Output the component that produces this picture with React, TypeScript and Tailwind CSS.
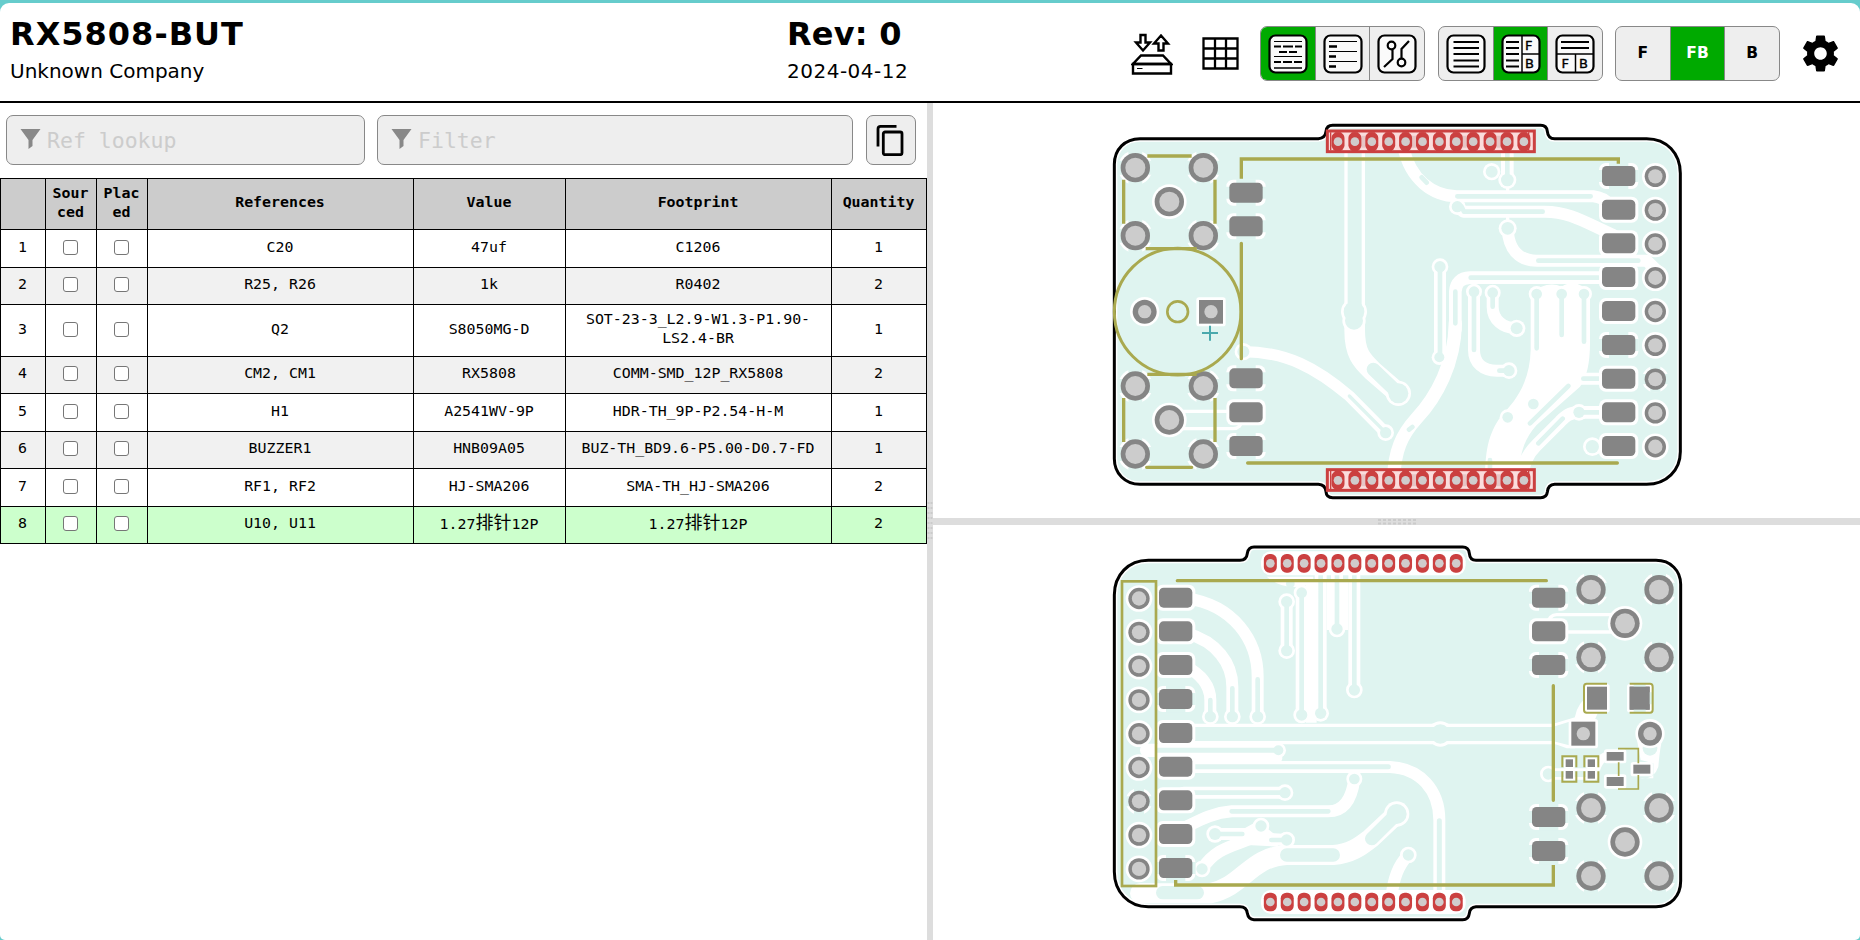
import React from "react";

const TEAL = "#dff4f0";
const PAD = "#858585";
const HOLE = "#cccccc";
const SILK = "#a9a94f";
const RED = "#cb4040";

type Pt = [number, number];
type RectPad = { x: number; y: number; thermal?: boolean };

function Trace({ d, w = 36 }: { d: string; w?: number }) {
  return <path d={d} stroke="#fff" strokeWidth={w} fill="none" strokeLinecap="round" strokeLinejoin="round" />;
}
function Slot({ d, w = 14 }: { d: string; w?: number }) {
  return <path d={d} stroke={TEAL} strokeWidth={w} fill="none" strokeLinecap="round" strokeLinejoin="round" />;
}
function Rings({ vias }: { vias: number[][] }) {
  return <>{vias.map(([x, y, r], i) => <circle key={i} cx={x} cy={y} r={r + 8} fill="#fff" />)}</>;
}
function Cores({ vias }: { vias: number[][] }) {
  return <>{vias.map(([x, y, r], i) => <circle key={i} cx={x} cy={y} r={r} fill={TEAL} />)}</>;
}
function Hole({ c, r, inner, thermal }: { c: Pt; r: number; inner: number; thermal?: boolean }) {
  const [x, y] = c;
  return (
    <g>
      <circle cx={x} cy={y} r={r + 8} fill="#fff" />
      {thermal && <path d={`M${x - r - 9} ${y}H${x + r + 9}M${x} ${y - r - 9}V${y + r + 9}`} stroke={TEAL} strokeWidth={r * 0.95} />}
      <circle cx={x} cy={y} r={r} fill={PAD} />
      <circle cx={x} cy={y} r={inner} fill={HOLE} />
    </g>
  );
}
function Smd({ x, y, thermal }: RectPad) {
  return (
    <g>
      <rect x={x - 9} y={y - 9} width={118} height={78} rx={20} fill="#fff" />
      {thermal && <path d={`M${x - 10} ${y + 30}H${x + 110}`} stroke={TEAL} strokeWidth={36} />}
      {thermal && <path d={`M${x + 50} ${y - 10}V${y + 70}`} stroke={TEAL} strokeWidth={58} />}
      <rect x={x} y={y} width={100} height={60} rx={14} fill={PAD} />
    </g>
  );
}
function Box({ x, y, w, h, halo = 8 }: { x: number; y: number; w: number; h: number; halo?: number }) {
  return (
    <g>
      <rect x={x - halo} y={y - halo} width={w + halo * 2} height={h + halo * 2} rx={halo} fill="#fff" />
      <rect x={x} y={y} width={w} height={h} fill={PAD} />
    </g>
  );
}
const PINS = Array.from({ length: 12 }, (_, i) => i);
function Pins({ x, y, boxed }: { x: number; y: number; boxed?: boolean }) {
  return (
    <g>
      {boxed ? (
        <>
          <rect x={x - 32} y={y - 32} width={621} height={62} fill="#fbdcdc" stroke={RED} strokeWidth={9} />
          <path d={`M${x - 22} ${y - 28}V${y + 26}M${x + 572} ${y - 28}V${y + 26}`} stroke={RED} strokeWidth={4} />
          <path d={`M${x + 76} ${y - 18}v36M${x + 228} ${y - 18}v36M${x + 380} ${y - 18}v36M${x + 482} ${y - 18}v36`} stroke="#e6c6c6" strokeWidth={12} />
          <path d={`M${x - 10} ${y - 25}H${x + 567}M${x - 10} ${y + 25}H${x + 567}`} stroke={RED} strokeWidth={6} strokeDasharray="20 30.7" />
        </>
      ) : (
        <rect x={x - 28} y={y - 36} width={614} height={72} rx={30} fill="#fff" />
      )}
      {PINS.map((i) => (
        <g key={i}>
          <rect x={x + i * 50.7 - 19.5} y={y - 28} width={39} height={56} rx={17} fill={RED} />
          <circle cx={x + i * 50.7} cy={y} r={13} fill="#d0cccc" />
        </g>
      ))}
    </g>
  );
}

const FRONT = "M120 86H655Q676 84 678 64Q680 46 698 46H1322Q1340 46 1342 64Q1344 86 1364 86H1640C1700 86 1741 130 1741 190V1025C1741 1080 1700 1123 1640 1123H1364Q1344 1124 1342 1146Q1340 1163 1322 1163H698Q679 1163 678 1145Q676 1124 655 1123H120C75 1123 43 1090 43 1046V163C43 118 75 86 120 86Z";
const BACK = "M145 91H420Q440 90 442 70Q445 51 462 51H1088Q1106 51 1108 70Q1110 91 1128 91H1668C1712 91 1742 122 1742 163V1053C1742 1098 1712 1130 1668 1130H1128Q1110 1131 1108 1150Q1106 1169 1088 1169H462Q445 1168 442 1150Q440 1130 420 1130H145C85 1130 43 1085 43 1025V195C43 135 85 91 145 91Z";

const BIG_FRONT: [Pt, boolean][] = [
  [[106, 173], true], [[310, 173], true], [[208, 275], false], [[106, 377], true], [[310, 377], true],
  [[106, 828], true], [[310, 828], true], [[208, 930], false], [[106, 1032], true], [[310, 1032], true],
];
const BIG_BACK: [Pt, boolean][] = [
  [[1473, 179], true], [[1677, 179], true], [[1575, 280], false], [[1473, 382], true], [[1677, 382], true],
  [[1473, 834], true], [[1677, 834], true], [[1575, 936], false], [[1473, 1038], true], [[1677, 1038], true],
];
const FRONT_PADS: RectPad[] = [
  { x: 388, y: 218, thermal: true }, { x: 388, y: 319, thermal: true }, { x: 388, y: 775, thermal: true },
  { x: 388, y: 877 }, { x: 388, y: 978, thermal: true },
  { x: 1506, y: 168, thermal: true }, { x: 1506, y: 269 }, { x: 1506, y: 370 }, { x: 1506, y: 471 }, { x: 1506, y: 573 },
  { x: 1506, y: 675, thermal: true }, { x: 1506, y: 776 }, { x: 1506, y: 877 }, { x: 1506, y: 978 },
];
const BACK_PADS: RectPad[] = [
  { x: 177, y: 173 }, { x: 177, y: 274 }, { x: 177, y: 375 }, { x: 177, y: 477, thermal: true }, { x: 177, y: 579 },
  { x: 177, y: 680 }, { x: 177, y: 781 }, { x: 177, y: 882 }, { x: 177, y: 984, thermal: true },
  { x: 1296, y: 173, thermal: true }, { x: 1296, y: 274 }, { x: 1296, y: 375, thermal: true },
  { x: 1296, y: 831, thermal: true }, { x: 1296, y: 933, thermal: true },
];
const FRONT_VIAS = [
  [762, 605, 31], [762, 632, 27], [895, 850, 30], [430, 725, 18], [857, 968, 17], [1020, 470, 17], [1018, 742, 15], [1122, 545, 16], [1227, 782, 17],
  [1178, 548, 16], [1250, 655, 18], [1310, 552, 16], [1385, 552, 16], [1452, 552, 16], [1437, 907, 17], [1477, 1010, 20],
  [1072, 290, 17], [1175, 185, 18], [1222, 210, 19], [1223, 355, 19], [1300, 882, 16], [1223, 922, 16],
];
const BACK_VIAS = [
  [473, 560, 17], [397, 560, 17], [331, 560, 17], [535, 661, 15], [763, 747, 16], [555, 788, 17], [345, 912, 18], [483, 888, 17],
  [560, 930, 17], [306, 1017, 17], [890, 852, 30], [925, 975, 17], [560, 215, 17], [560, 362, 17], [605, 188, 16], [605, 555, 17],
  [662, 550, 17], [711, 297, 17], [763, 480, 17], [1345, 732, 17],
];
const ROWS9 = [0, 1, 2, 3, 4, 5, 6, 7, 8];

function FrontBoard() {
  return (
    <svg className="block h-full w-full" viewBox="-501 -21 2781 1245">
      <clipPath id="front"><path d={FRONT} /></clipPath>
      <g clipPath="url(#front)">
        <path d={FRONT} fill={TEAL} />
        <Trace w={62} d="M764 110V660C764 730 785 752 817 782L895 850" />
        <Trace d="M430 725C560 725 650 775 748 858L857 968" w={34} />
        <Trace d="M1066 640C1064 760 1010 860 950 925C905 975 884 1020 880 1110" w={40} />
        <Trace d="M1020 470V742" />
        <Trace d="M1066 660V545Q1068 505 1110 503H1510" w={38} />
        <Trace d="M1122 545V720C1122 760 1150 782 1190 782H1227" />
        <Trace d="M1178 548V590C1178 630 1210 655 1250 655" />
        <path fill="#fff" d="M1292 552V720C1290 800 1260 860 1210 910C1170 960 1155 1010 1155 1110H1255C1260 1020 1275 985 1310 945L1440 830Q1470 790 1470 700V552Q1430 500 1385 530Q1340 510 1292 552Z" />
        <Trace d="M1430 806H1510" />
        <Trace d="M1510 907H1437C1405 908 1395 920 1380 935L1310 1005Q1268 1045 1265 1110" w={38} />
        <Trace d="M910 110C930 210 1000 258 1070 259H1480Q1510 262 1530 285" />
        <Trace d="M1072 290L1090 305H1335C1410 305 1460 340 1540 375" />
        <Trace d="M1222 210V110" w={38} />
        <Trace d="M1223 220V240M1223 320V355" w={10} />
        <Trace d="M1223 355C1225 420 1260 452 1310 452H1640L1680 490" />
        <Trace d="M208 930H400" w={62} />
        <Rings vias={FRONT_VIAS} />
        <Slot w={42} d="M764 110V590" />
        <Slot w={40} d="M820 778L895 850" />
        <Slot w={10} d="M748 858L857 968" />
        <Slot w={14} d="M927 959L937 951M965 202L980 218M1020 470V742M1066 545V640" />
        <Slot d="M1112 503H1495M1122 545V720M1198 782H1227M1178 548V590" />
        <Slot d="M1310 552V715M1385 552V675M1452 552V695M1405 828L1290 940M1388 926L1315 1000M1170 1050V1100" />
        <Slot d="M1450 806H1510M1437 907H1510M1072 259H1472M1085 290L1092 305H1328M1222 210V110M1315 452H1615" />
        <Slot w={42} d="M208 930H400" />
        <Cores vias={FRONT_VIAS} />
      </g>
      <path d={FRONT} fill="none" stroke="#fff" strokeWidth={18} />
      <path d={FRONT} fill="none" stroke="#000" strokeWidth={9} />
      {BIG_FRONT.map(([c, t], i) => <Hole key={i} c={c} r={44} inner={30} thermal={t} />)}
      {FRONT_PADS.map((p, i) => <Smd key={i} {...p} />)}
      {ROWS9.map((i) => <Hole key={i} c={[1666, 199 + i * 101.4]} r={32} inner={21.5} thermal={i === 6} />)}
      <Hole c={[134, 605]} r={36} inner={20} />
      <Box x={297} y={570} w={72} h={71} />
      <circle cx={333} cy={605} r={20} fill={HOLE} />
      <path d="M330 647V692M306 669H354" stroke="#4aa9ad" strokeWidth={6} />
      <g fill="none" stroke={SILK} strokeWidth={9} strokeLinecap="round">
        <circle cx={233} cy={605} r={190} />
        <circle cx={233} cy={605} r={31} strokeWidth={8} />
        <path strokeWidth={10} strokeLinecap="butt" d="M142 138H275M71 209V341M345 209V341M137 416H290M142 793H290M71 864V996M345 864V996" />
        <path strokeWidth={10} d="M140 1072H275M424 400V746M443 1059H1552" />
        <path strokeWidth={10} strokeLinecap="butt" d="M424 206V147H1555V161" />
      </g>
      <Pins x={714} y={95} boxed />
      <Pins x={714} y={1111} boxed />
    </svg>
  );
}

function BackBoard() {
  return (
    <svg className="block h-full w-full" viewBox="-501 -18 2781 1248">
      <clipPath id="back"><path d={BACK} /></clipPath>
      <g clipPath="url(#back)">
        <path d={BACK} fill={TEAL} />
        <Trace d="M260 205C400 225 473 330 473 440V560" />
        <Trace d="M260 310C350 335 397 400 397 470V560" />
        <Trace d="M250 405C310 435 331 470 331 510V560" />
        <Trace w={62} d="M240 612H1410" />
        <Trace w={40} d="M140 661H535" />
        <Trace w={24} d="M270 684H535" />
        <Trace d="M250 711H870C960 715 1018 780 1018 870V1110" />
        <Trace d="M763 747C755 810 730 844 685 844H395C340 848 300 870 260 890" />
        <Trace d="M250 788H555" />
        <Trace d="M345 912H440L483 888M480 925L560 930M306 1017C350 950 400 950 480 915" />
        <path fill="#fff" d="M430 900L483 880L520 910L535 950L440 945Z" />
        <Trace w={60} d="M120 1090H330C430 1070 450 980 560 975H700C750 972 780 950 812 925L890 852" />
        <Trace d="M925 975C900 1000 880 1040 875 1100" />
        <Trace d="M560 215V362M605 188V555M662 110V550M711 110V297M763 110V480" />
        <path fill="#fff" d="M618 150H650V578H618ZM680 150H700V300H680ZM725 150H745V300H725ZM500 140H640V160Q560 190 500 140Z" />
        <circle cx={571} cy={161} r={13} fill={TEAL} />
        <circle cx={1021} cy={612} r={38} fill="#fff" />
        <Trace w={62} d="M1370 280H1575" />
        <path fill="#fff" d="M1455 505Q1420 540 1425 580H1480L1495 545H1465Z" />
        <path fill="#fff" d="M1365 580L1425 562V655H1400L1365 642Z" />
        <Trace d="M1345 732H1480" w={34} />
        <path fill="#fff" d="M1480 712Q1490 665 1530 662V690Q1510 690 1500 722H1480Z" />
        <path fill="#fff" d="M1610 625L1622 690L1660 700V745H1620V745Q1662 750 1675 710Q1680 650 1688 625Z" />
        <Rings vias={BACK_VIAS} />
        <Slot d="M473 448V560M397 475V560M331 510V560" />
        <Slot w={42} d="M240 612H1410" />
        <circle cx={1021} cy={612} r={29} fill={TEAL} />
        <path fill={TEAL} d="M1355 592L1425 570V650L1355 632Z" />
        <Slot w={15} d="M172 661H535M280 710H865M1018 872V1110" />
        <Slot d="M395 844H685M250 788H555M345 912H427M514 930H560" />
        <Slot w={40} d="M560 975H700M815 926L890 852M188 1088H292" />
        <Slot d="M560 215V362M605 188V555M662 110V550M711 110V297M763 110V480" />
        <Slot w={42} d="M1370 280H1575" />
        <Slot w={18} d="M1345 732H1480" />
        <circle cx={1650} cy={655} r={22} fill={TEAL} />
        <Cores vias={BACK_VIAS} />
      </g>
      <path d={BACK} fill="none" stroke="#fff" strokeWidth={18} />
      <path d={BACK} fill="none" stroke="#000" strokeWidth={9} />
      {BIG_BACK.map(([c, t], i) => <Hole key={i} c={c} r={44} inner={30} thermal={t} />)}
      {BACK_PADS.map((p, i) => <Smd key={i} {...p} />)}
      {ROWS9.map((i) => <Hole key={i} c={[117, 205.5 + i * 101.4]} r={32} inner={21.5} thermal={i === 6} />)}
      <Box x={1461} y={470} w={60} h={69} />
      <Box x={1589} y={470} w={60} h={69} />
      <path d="M1619 455V475M1619 535V555M1645 505H1660" stroke={TEAL} strokeWidth={36} />
      <rect x={1589} y={470} width={60} height={69} fill={PAD} />
      <Box x={1414} y={575} w={72} h={72} />
      <circle cx={1450} cy={611} r={20} fill={HOLE} />
      <Hole c={[1650, 611]} r={36} inner={20} />
      <Box x={1520} y={666} w={51} h={26} />
      <Box x={1520} y={741} w={51} h={27} />
      <Box x={1600} y={704} w={51} h={27} />
      {[1397, 1463].map((x) => (
        <g key={x}>
          <Box x={x} y={688} w={22} h={23} halo={5} />
          <Box x={x} y={723} w={22} h={23} halo={5} />
        </g>
      ))}
      <g fill="none" stroke={SILK} strokeWidth={6}>
        <rect x={66} y={154} width={102} height={914} strokeWidth={8} />
        <path strokeWidth={10} strokeLinecap="round" d="M232 152H1339M1360 467V811" />
        <path strokeWidth={10} d="M227 1050V1065H1360V1005" />
        <path d="M1521 461H1460Q1452 461 1452 470V539Q1452 548 1460 548H1521M1589 461H1650Q1658 461 1658 470V539Q1658 548 1650 548H1589" />
        <path d="M1387 712V679H1429V712M1387 724V755H1429V724M1453 712V679H1495V712M1453 724V755H1495V724" />
        <path d="M1554 656H1615V700M1615 735V777H1554M1556 697V738" strokeWidth={5} />
      </g>
      <Pins x={511} y={100} />
      <Pins x={511} y={1116} />
    </svg>
  );
}

function Frame({ children }: { children: React.ReactNode }) {
  return (
    <svg className="h-10 w-10" viewBox="0 0 40 40" fill="none" stroke="#000">
      <rect x="1.5" y="1.5" width="37" height="37" rx="6" fill="#fafafa" strokeWidth="2.2" />
      {children}
    </svg>
  );
}
const label = "font-['DejaVu_Sans'] text-[13px] font-normal";
const ICONS = {
  full: <Frame><path strokeWidth="1" d="M6 7.5H34M6 22.5H34" /><path strokeWidth="1.4" d="M6 34H34" /><path strokeWidth="2.2" d="M6 12.5h7m2 0h10m2 0h7M11 18h8m2 0h8M6 28h7m2 0h9m2 0h8" /></Frame>,
  tail: <Frame><path strokeWidth="1.2" d="M6 7.5H34M6 17.5H34M6 27.5H34" /><path strokeWidth="2.4" d="M6 12.5h8M6 22.5h7M6 32.5h7" /></Frame>,
  nets: <Frame><g strokeWidth="2.2"><circle cx="14.5" cy="11.5" r="3.8" /><circle cx="24.5" cy="28.5" r="3.8" /><path d="M15.5 15.5V25L7 33M24.5 24.5V15L32 7" /></g></Frame>,
  bom: <Frame><path strokeWidth="1.8" d="M7.5 8H33M7.5 14H33M7.5 20H33M7.5 26.5H33M7.5 32.5H33" /></Frame>,
  lr: <Frame><path strokeWidth="1.8" d="M5 8h13M5 14h13M5 20h13M5 26.5h13M5 32.5h13" /><path strokeWidth="1.5" d="M21 2V38M21 20H38" /><g fill="#000" stroke="#000" strokeWidth=".4"><text className={label} x="24" y="15.8">F</text><text className={label} x="24" y="33.8">B</text></g></Frame>,
  tb: <Frame><path strokeWidth="1.8" d="M6 8H34M6 14H34" /><path strokeWidth="1.5" d="M2 20H38M20.5 20V38" /><g fill="#000" stroke="#000" strokeWidth=".4"><text className={label} x="6.5" y="33.8">F</text><text className={label} x="24" y="33.8">B</text></g></Frame>,
};

function Group({ items, active }: { items: React.ReactNode[]; active: number }) {
  return (
    <div className="flex h-[55px] w-[165px] overflow-hidden rounded-[7px] border border-[#888] bg-[#eee] font-['DejaVu_Sans'] text-[15.5px] font-bold">
      {items.map((item, i) => (
        <button key={i} className={`flex flex-1 items-center justify-center ${i ? "border-l border-[#888]" : ""} ${i === active ? "bg-[#00aa00] text-white" : "text-black"}`}>
          {item}
        </button>
      ))}
    </div>
  );
}

function Filter({ text, className }: { text: string; className: string }) {
  return (
    <div className={`flex h-[50px] items-center rounded-[7px] border border-[#888] bg-[#eee] pl-[13px] ${className}`}>
      <svg className="mt-[-3px] h-5 w-[21px]" viewBox="0 0 21 20"><path d="M.5 0H20.5L12.5 11V17L8.5 20V11Z" fill="#888" /></svg>
      <span className="mt-[3px] ml-[6px] font-['DejaVu_Sans_Mono',monospace] text-[21.5px] text-[#ccc]">{text}</span>
    </div>
  );
}

const HEAD = ["", "Sour\nced", "Plac\ned", "References", "Value", "Footprint", "Quantity"];
const HEADER_PIN = <>1.27<span className="text-[18px] leading-none">排针</span>12P</>;
const ROWS: [string, React.ReactNode, React.ReactNode, string, string][] = [
  ["C20", "47uf", "C1206", "1", "h-[38px]"],
  ["R25, R26", "1k", "R0402", "2", "h-[37px]"],
  ["Q2", "S8050MG-D", "SOT-23-3_L2.9-W1.3-P1.90-\nLS2.4-BR", "1", "h-[52px]"],
  ["CM2, CM1", "RX5808", "COMM-SMD_12P_RX5808", "2", "h-[37px]"],
  ["H1", "A2541WV-9P", "HDR-TH_9P-P2.54-H-M", "1", "h-[38px]"],
  ["BUZZER1", "HNB09A05", "BUZ-TH_BD9.6-P5.00-D0.7-FD", "1", "h-[37px]"],
  ["RF1, RF2", "HJ-SMA206", "SMA-TH_HJ-SMA206", "2", "h-[38px]"],
  ["U10, U11", HEADER_PIN, HEADER_PIN, "2", "h-[37px]"],
];
const cell = "border-r border-b border-black pt-0 pr-px pb-[3px] pl-0 whitespace-pre";
const Check = () => <span className="mx-auto block h-[15px] w-[15px] rounded-[3px] border border-[#767676] bg-white" />;

function BomTable() {
  return (
    <table className="w-[927px] table-fixed border-separate border-spacing-0 border-t border-l border-black text-center font-['DejaVu_Sans_Mono','Noto_Sans_CJK_SC',monospace] text-[14.9px] leading-[19px] text-black">
      <colgroup>
        <col className="w-[45px]" /><col className="w-[51px]" /><col className="w-[51px]" /><col className="w-[266px]" />
        <col className="w-[152px]" /><col className="w-[266px]" /><col className="w-[95px]" />
      </colgroup>
      <thead>
        <tr className="h-[51px] bg-[#ccc]">
          {HEAD.map((h, i) => <th key={i} className={cell}>{h}</th>)}
        </tr>
      </thead>
      <tbody>
        {ROWS.map(([ref, value, footprint, qty, height], i) => (
          <tr key={i} className={`${height} ${i === 7 ? "bg-[#ccffcc]" : i % 2 ? "bg-[#f1f1f1]" : "bg-white"}`}>
            <td className={cell}>{i + 1}</td>
            <td className={cell}><Check /></td>
            <td className={cell}><Check /></td>
            <td className={cell}>{ref}</td>
            <td className={cell}>{value}</td>
            <td className={cell}>{footprint}</td>
            <td className={cell}>{qty}</td>
          </tr>
        ))}
      </tbody>
    </table>
  );
}

export default function App() {
  return (
    <div className="h-[940px] w-[1860px] overflow-hidden bg-[#66cccc] pt-[3px] font-['DejaVu_Sans',sans-serif] text-black">
      <div className="flex h-[937px] flex-col overflow-hidden rounded-t-[9px] rounded-b-[5px] bg-white">
        <header className="flex h-[100px] shrink-0 border-b-2 border-black">
          <div className="w-[787px] pl-[10px]">
            <h1 className="mt-[12px] text-[32px] leading-[38px] font-bold tracking-[1px]">RX5808-BUT</h1>
            <p className="mt-[6px] text-[20px] leading-[24px]">Unknown Company</p>
          </div>
          <div className="w-[343px]">
            <h1 className="mt-[12px] text-[32px] leading-[38px] font-bold tracking-[0.2px]">Rev: 0</h1>
            <p className="mt-[6px] text-[20px] leading-[24px] tracking-[0.5px]">2024-04-12</p>
          </div>
          <div className="flex h-[101px] items-center">
            <svg className="ml-[1px] h-[42px] w-[42px]" viewBox="0 0 42 42" fill="none" stroke="#000" strokeWidth="2.4">
              <path d="M9.5 2H14.500V9.500H19L12 17.500L5 9.500H9.500ZM27.500 17.500V10.500H23L30 2.500L37 10.500H32.500V17.500ZM10 22.500H32L40 31H2Z" />
              <path d="M2 31H40V40.500H2Z" />
              <path strokeWidth="1.2" d="M6 35.500H11.500" />
            </svg>
            <svg className="ml-[29px] h-[33px] w-[37px]" viewBox="0 0 37 33" fill="none" stroke="#000" strokeWidth="2.3">
              <path d="M1.500 1.500H35.500V31.500H1.500ZM13 1V32M24 1V32M1 11.500H36M1 21.500H36" />
            </svg>
            <div className="ml-[21px] flex items-center">
              <Group active={0} items={[ICONS.full, ICONS.tail, ICONS.nets]} />
              <div className="mr-3 ml-[13px]"><Group active={1} items={[ICONS.bom, ICONS.lr, ICONS.tb]} /></div>
              <Group active={1} items={["F", "FB", "B"]} />
            </div>
            <svg className="ml-[19px] h-[43px] w-[43px]" viewBox="0 0 24 24">
              <path d="M19.430 12.980c.04-.32.07-.64.07-.98s-.03-.66-.07-.98l2.110-1.650c.19-.15.24-.42.12-.64l-2-3.460c-.12-.22-.39-.3-.61-.22l-2.490 1c-.52-.4-1.080-.73-1.690-.98l-.38-2.650C14.460 2.180 14.250 2 14 2h-4c-.25 0-.46.18-.49.42l-.38 2.650c-.61.25-1.170.59-1.690.98l-2.490-1c-.23-.09-.49 0-.61.22l-2 3.460c-.13.22-.07.49.12.64l2.110 1.650c-.04.32-.07.65-.07.98s.03.66.07.98l-2.110 1.650c-.19.15-.24.42-.12.64l2 3.460c.12.22.39.3.61.22l2.490-1c.52.4 1.080.73 1.690.98l.38 2.650c.03.24.24.42.49.42h4c.25 0 .46-.18.49-.42l.38-2.650c.61-.25 1.170-.59 1.690-.98l2.490 1c.23.09.49 0 .61-.22l2-3.460c.12-.22.07-.49-.12-.64l-2.110-1.650zM12 15.500c-1.930 0-3.500-1.570-3.500-3.500s1.570-3.500 3.500-3.500 3.500 1.570 3.500 3.500-1.570 3.500-3.500 3.500z" />
            </svg>
          </div>
        </header>
        <main className="flex min-h-0 flex-1">
          <section className="w-[927px]">
            <div className="flex h-[75px] pt-3 pl-[6px]">
              <Filter text="Ref lookup" className="w-[359px]" />
              <Filter text="Filter" className="ml-3 w-[476px]" />
              <button className="ml-[13px] flex h-[50px] w-[50px] items-center justify-center rounded-[7px] border border-[#888] bg-[#eee]">
                <svg className="mr-[2px] h-8 w-8" viewBox="0 0 32 32" fill="none" stroke="#000" strokeWidth="2.8">
                  <path d="M4 22.500V5Q4 2.300 6.700 2.300H22.500" />
                  <rect x="9.300" y="8" width="18.700" height="22.700" rx="1.800" />
                </svg>
              </button>
            </div>
            <BomTable />
          </section>
          <div className="flex w-[6px] flex-col items-center bg-[#ddd] pt-[399px]">
            <svg className="h-[38px] w-[6px]" viewBox="0 0 6 38"><path d="M1.500 0V38M4.500 0V38" stroke="#cbcbcb" strokeWidth="2" strokeDasharray="2 3" /></svg>
          </div>
          <section className="flex w-[927px] flex-col">
            <div className="h-[415px]"><FrontBoard /></div>
            <div className="flex h-[7px] shrink-0 justify-center bg-[#ddd]">
              <svg className="h-[7px] w-[38px]" viewBox="0 0 38 7"><path d="M0 2H38M0 5.500H38" stroke="#cbcbcb" strokeWidth="2" strokeDasharray="3 2" /></svg>
            </div>
            <div className="mt-[-1px] h-[416px] shrink-0"><BackBoard /></div>
          </section>
        </main>
      </div>
    </div>
  );
}
